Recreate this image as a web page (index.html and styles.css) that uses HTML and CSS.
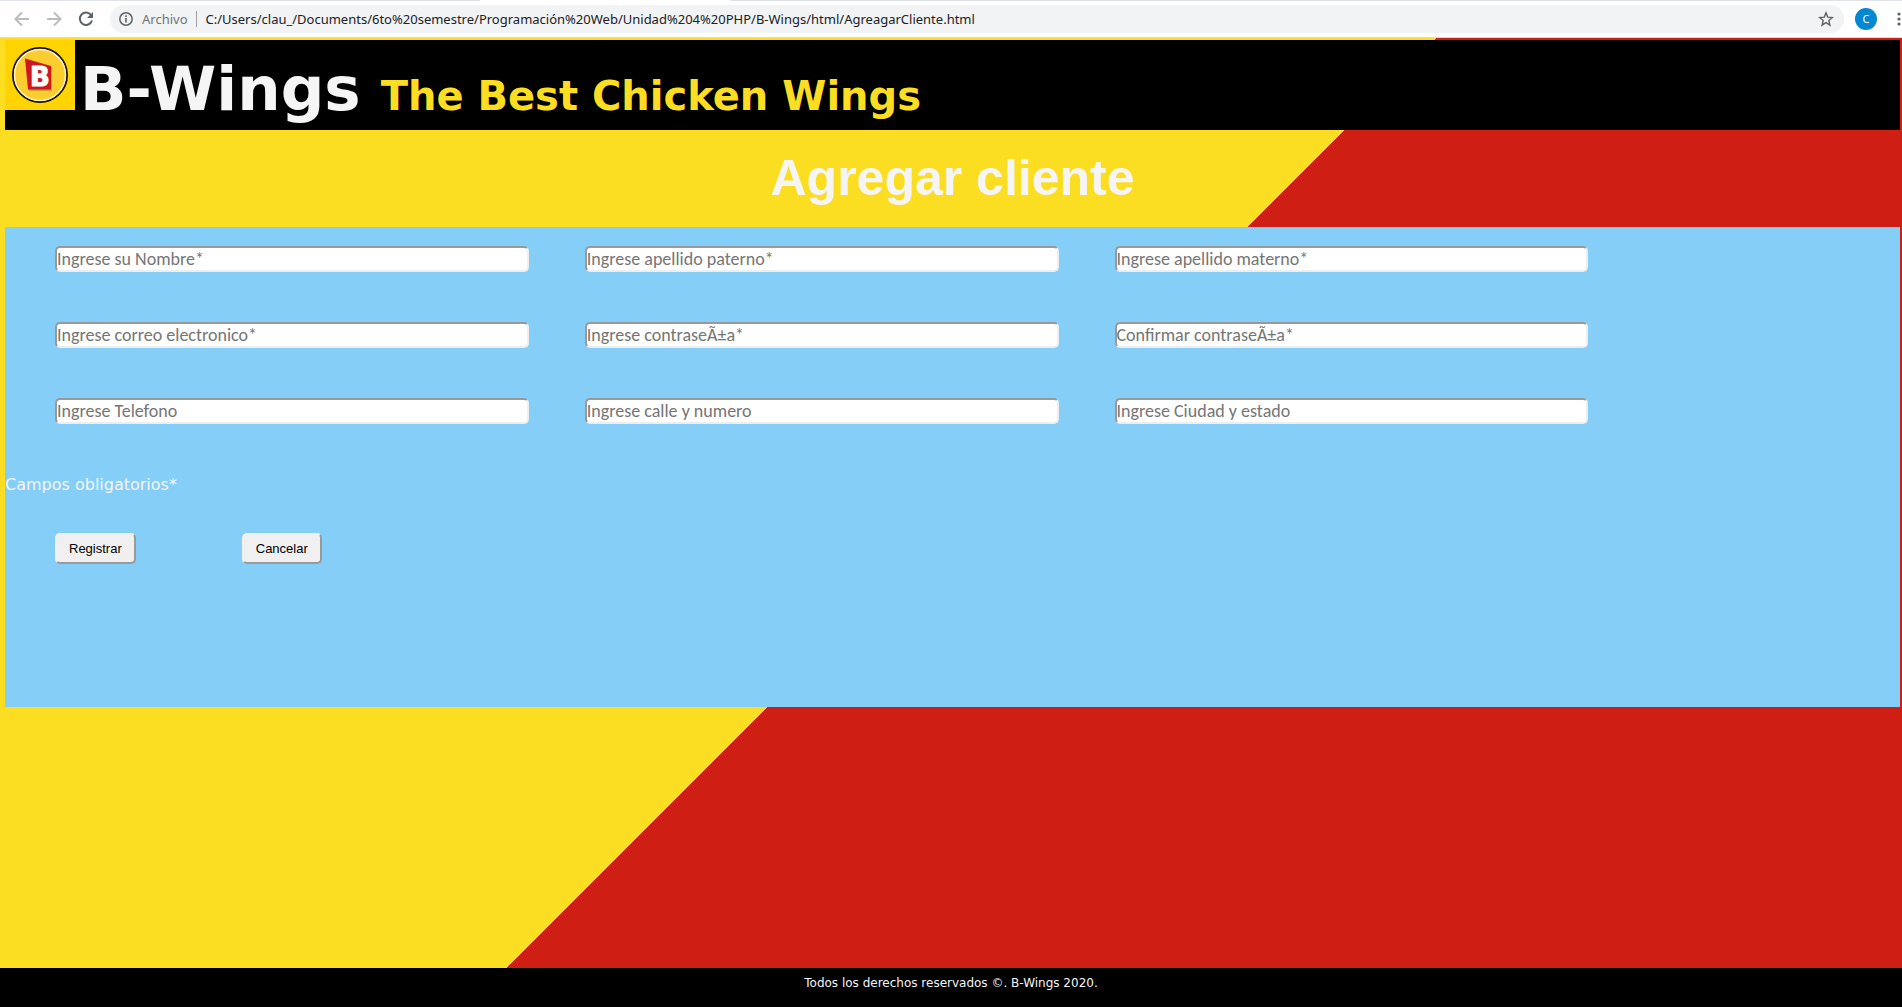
FILE: index.html
```html
<!DOCTYPE html>
<html lang="es">
<head>
<meta charset="utf-8">
<title>Agregar cliente</title>
<link rel="stylesheet" href="styles.css">
</head>
<body>
<div class="toolbar">
  <div class="tab-edge"><span class="tab-line tab-line-left"></span><span class="tab-gap"></span><span class="tab-line tab-line-right"></span></div>
  <div class="toolbar-row">
    <button class="tool" type="button" aria-label="Atrás"><svg width="16" height="16" viewBox="0 0 16 16" fill="none" stroke="#babcbe" stroke-width="2"><path d="M15 8H2M8 1.5L1.5 8L8 14.5"/></svg></button>
    <button class="tool" type="button" aria-label="Adelante"><svg width="16" height="16" viewBox="0 0 16 16" fill="none" stroke="#babcbe" stroke-width="2"><path d="M1 8h13M8 1.5L14.500 8L8 14.500"/></svg></button>
    <button class="tool" type="button" aria-label="Recargar"><svg width="16" height="16" viewBox="0 0 16 16"><path d="M13.200 4.200A6.200 6.200 0 1 0 14 9.500" fill="none" stroke="#5f6368" stroke-width="2"/><path d="M15 1v6H9z" fill="#5f6368"/></svg></button>
    <div class="address">
      <svg width="16" height="16" viewBox="0 0 16 16"><circle cx="8" cy="8" r="6.200" fill="none" stroke="#5f6368" stroke-width="1.500"/><path d="M7.200 7h1.600v4.500H7.200zM7.200 4.300h1.600v1.600H7.200z" fill="#5f6368"/></svg>
      <label class="scheme" for="url">Archivo</label>
      <input class="url" id="url" type="text" value="C:/Users/clau_/Documents/6to%20semestre/Programación%20Web/Unidad%204%20PHP/B-Wings/html/AgreagarCliente.html">
      <button class="tool" type="button" aria-label="Marcar"><svg width="16" height="16" viewBox="0 0 16 16" fill="none" stroke="#5f6368" stroke-width="1.400"><path d="M8 1.800l1.700 4.300 4.700.4-3.600 3 1.100 4.600L8 11.600l-3.900 2.500 1.100-4.600-3.600-3 4.700-.4z"/></svg></button>
    </div>
    <button class="avatar" type="button">C</button>
    <button class="menu" type="button" aria-label="Menú"><svg width="4" height="14" viewBox="0 0 4 14" fill="#5f6368"><circle cx="2" cy="2" r="1.600"/><circle cx="2" cy="7" r="1.600"/><circle cx="2" cy="12" r="1.600"/></svg></button>
  </div>
</div>
<div class="page">
  <header class="banner">
    <svg class="logo" width="70" height="70" viewBox="0 0 70 70">
      <rect width="70" height="70" fill="#ffd400"/>
      <circle cx="35" cy="35" r="27" fill="#fbcd2e" stroke="#1a1408" stroke-width="2"/>
      <circle cx="35" cy="35" r="25.500" fill="none" stroke="#fff3c4" stroke-width="1.500"/>
      <path d="M21 20l26 7v24H24z" fill="#9a7a20" opacity=".5"/>
      <path d="M20 18.500L46 26v23.500H23z" fill="#cf1721"/>
      <text class="logo-letter" x="25" y="46">B</text>
    </svg>
    <h1 class="brand">B-Wings</h1>
    <p class="slogan">The Best Chicken Wings</p>
  </header>
  <main class="content">
    <h2 class="title">Agregar cliente</h2>
    <form class="form">
      <div class="fields">
        <input class="field" type="text" aria-label="Nombre" placeholder="Ingrese su Nombre*">
        <input class="field" type="text" aria-label="Apellido paterno" placeholder="Ingrese apellido paterno*">
        <input class="field" type="text" aria-label="Apellido materno" placeholder="Ingrese apellido materno*">
        <input class="field" type="email" aria-label="Correo electronico" placeholder="Ingrese correo electronico*">
        <input class="field" type="password" aria-label="Clave" placeholder="Ingrese contraseÃ±a*">
        <input class="field" type="password" aria-label="Confirmar clave" placeholder="Confirmar contraseÃ±a*">
        <input class="field" type="tel" aria-label="Telefono" placeholder="Ingrese Telefono">
        <input class="field" type="text" aria-label="Calle y numero" placeholder="Ingrese calle y numero">
        <input class="field" type="text" aria-label="Ciudad y estado" placeholder="Ingrese Ciudad y estado">
      </div>
      <p class="note">Campos obligatorios*</p>
      <div class="actions">
        <button class="action" type="submit">Registrar</button>
        <button class="action" type="reset">Cancelar</button>
      </div>
    </form>
  </main>
  <footer class="footer">Todos los derechos reservados ©. B-Wings 2020.</footer>
</div>
</body>
</html>
```
FILE: styles.css
```css
* { box-sizing: border-box; }
body {
  margin: 0;
  min-height: 100vh;
  display: flex;
  flex-direction: column;
  font-family: Verdana, "DejaVu Sans", sans-serif;
}
h1, h2, p { margin: 0; }
button { font-family: inherit; cursor: pointer; }

/* Browser toolbar */
.toolbar {
  background: #fff;
  border-bottom: 1px solid #d8dadd;
  font-family: "Segoe UI", "Noto Sans", sans-serif;
  font-size: 13px;
}
.tab-edge { display: flex; height: 1px; }
.tab-line { background: #dee1e6; }
.tab-line-left { width: 480px; }
.tab-gap { width: 250px; }
.tab-line-right { flex: 1; }
.toolbar-row {
  display: flex;
  align-items: center;
  height: 36px;
  padding-left: 14px;
}
.tool {
  display: flex;
  padding: 0;
  border: 0;
  background: none;
}
.toolbar-row > .tool { margin-right: 16px; }
.address {
  flex: 1;
  display: flex;
  align-items: center;
  height: 28px;
  padding: 0 10px 0 8px;
  border-radius: 14px;
  background: #f1f3f4;
}
.scheme {
  margin-left: 8px;
  padding-right: 8px;
  border-right: 1px solid #9aa0a6;
  line-height: 16px;
  color: #70757a;
}
.url {
  flex: 1;
  margin-left: 9px;
  padding: 0;
  border: 0;
  background: none;
  color: #202124;
  font: inherit;
}
.avatar {
  width: 22px;
  height: 22px;
  margin: 0 20px 0 11px;
  padding: 0;
  border: 0;
  border-radius: 50%;
  background: #0288d1;
  color: #fff;
  font-size: 11px;
  line-height: 22px;
}
.menu {
  display: flex;
  width: 5px;
  padding: 0;
  border: 0;
  background: none;
}

/* Page */
.page {
  flex: 1;
  display: flex;
  flex-direction: column;
  padding-top: 2px;
  background: linear-gradient(135deg, #fbde22 calc(50% + 1px), #cf1f14 calc(50% + 1px));
}
.banner {
  display: flex;
  align-items: baseline;
  height: 90px;
  margin: 0 2px 0 5px;
  background: #000;
}
.brand {
  margin-left: 5px;
  color: #f5f5f5;
  font-size: 61px;
  line-height: 70px;
}
.slogan {
  margin-left: 20px;
  color: #fbde22;
  font-size: 40px;
  font-weight: bold;
  line-height: 48px;
}
.logo-letter {
  font: 900 26px "DejaVu Sans", sans-serif;
  fill: #fff;
  stroke: #fff;
  stroke-width: 1px;
}
.content {
  flex: 1;
  margin: 0 2px 0 5px;
}
.title {
  padding: 20px 0;
  text-align: center;
  color: #f5f5f5;
  font: bold 50px/57px Arial, "Liberation Sans", sans-serif;
}
.form {
  min-height: 480px;
  padding-top: 19px;
  background: #84cef8;
}
.fields {
  display: grid;
  grid-template-columns: repeat(3, calc((100% + 50px) / 4));
  gap: 50px 56px;
  padding-left: 50px;
}
.field {
  width: 100%;
  height: 26px;
  padding: 0;
  border: 2px solid;
  border-color: #999 #eee #eee #999;
  border-radius: 5px;
  background: #fff;
  font: 18px Calibri, Carlito, Lato, sans-serif;
}
.field::placeholder { color: #757575; }
.note {
  margin-top: 51px;
  color: #f5f5f5;
  font-size: 16px;
  line-height: 20px;
}
.actions {
  display: flex;
  gap: 106px;
  margin-top: 38px;
  padding-left: 50px;
}
.action {
  height: 31px;
  padding: 0 12px;
  border: 2px solid;
  border-color: #f0f0f0 #999 #999 #f0f0f0;
  border-radius: 5px;
  background: #f0f0f0;
  color: #000;
  font: 13px Arial, "Liberation Sans", sans-serif;
}
.footer {
  height: 39px;
  padding-top: 7px;
  background: #000;
  color: #f5f5f5;
  text-align: center;
  font-size: 12px;
  line-height: 16px;
}
```
